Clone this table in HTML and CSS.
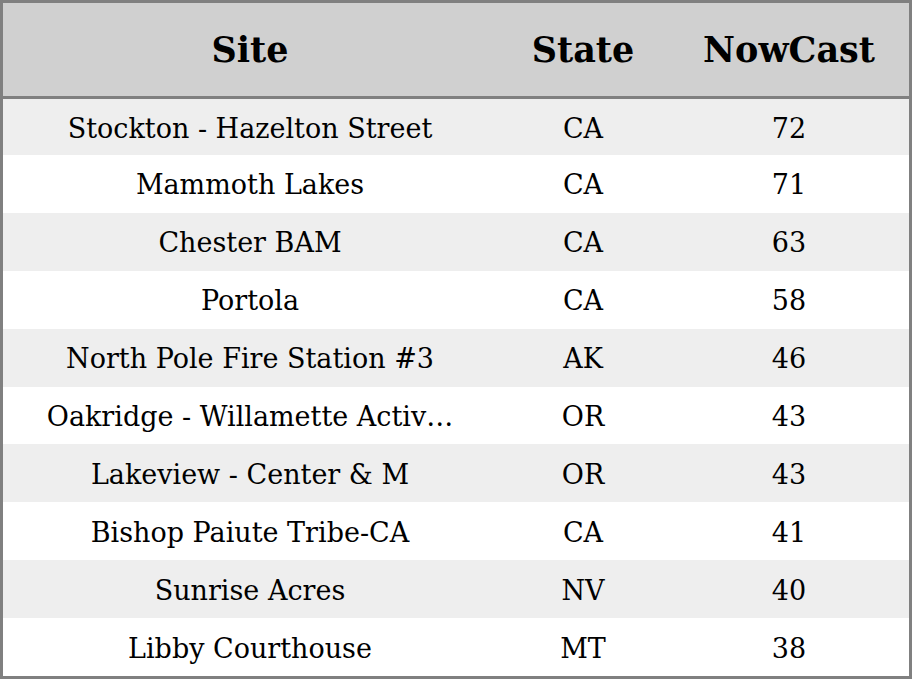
FILE: index.html
```html
<!DOCTYPE html>
<html>
<head>
<meta charset="utf-8">
<link rel="stylesheet" href="styles.css">
</head>
<body>
<div class="table">
  <div class="head">
    <div class="cell">Site</div>
    <div class="cell">State</div>
    <div class="cell">NowCast</div>
  </div>
  <div class="body">
    <div class="row first"><div class="cell">Stockton - Hazelton Street</div><div class="cell">CA</div><div class="cell">72</div></div>
    <div class="row"><div class="cell">Mammoth Lakes</div><div class="cell">CA</div><div class="cell">71</div></div>
    <div class="row"><div class="cell">Chester BAM</div><div class="cell">CA</div><div class="cell">63</div></div>
    <div class="row"><div class="cell">Portola</div><div class="cell">CA</div><div class="cell">58</div></div>
    <div class="row"><div class="cell">North Pole Fire Station #3</div><div class="cell">AK</div><div class="cell">46</div></div>
    <div class="row"><div class="cell">Oakridge - Willamette Activ…</div><div class="cell">OR</div><div class="cell">43</div></div>
    <div class="row"><div class="cell">Lakeview - Center &amp; M</div><div class="cell">OR</div><div class="cell">43</div></div>
    <div class="row"><div class="cell">Bishop Paiute Tribe-CA</div><div class="cell">CA</div><div class="cell">41</div></div>
    <div class="row"><div class="cell">Sunrise Acres</div><div class="cell">NV</div><div class="cell">40</div></div>
    <div class="row"><div class="cell">Libby Courthouse</div><div class="cell">MT</div><div class="cell">38</div></div>
  </div>
</div>
</body>
</html>
```
FILE: styles.css
```css
* { box-sizing: border-box; }
html, body { margin: 0; padding: 0; }
body {
  width: 912px;
  height: 679px;
  font-family: "DejaVu Serif", serif;
  color: #000;
  background: #fff;
}
.table {
  width: 912px;
  height: 679px;
  border: 3px solid #808080;
  display: flex;
  flex-direction: column;
}
.head, .row {
  display: grid;
  grid-template-columns: 494px 172px 240px;
  align-items: center;
}
.head {
  height: 96px;
  flex: none;
  background: #d0d0d0;
  border-bottom: 3px solid #808080;
  font-weight: bold;
  font-size: 35px;
}
.body {
  flex: 1;
  display: flex;
  flex-direction: column;
}
.row {
  flex: 1;
  font-size: 27px;
  padding-top: 2px;
}
.row.first {
  flex: none;
  height: 56px;
}
.row:nth-child(odd) { background: #eeeeee; }
.cell {
  text-align: center;
  white-space: nowrap;
  overflow: hidden;
}
```
